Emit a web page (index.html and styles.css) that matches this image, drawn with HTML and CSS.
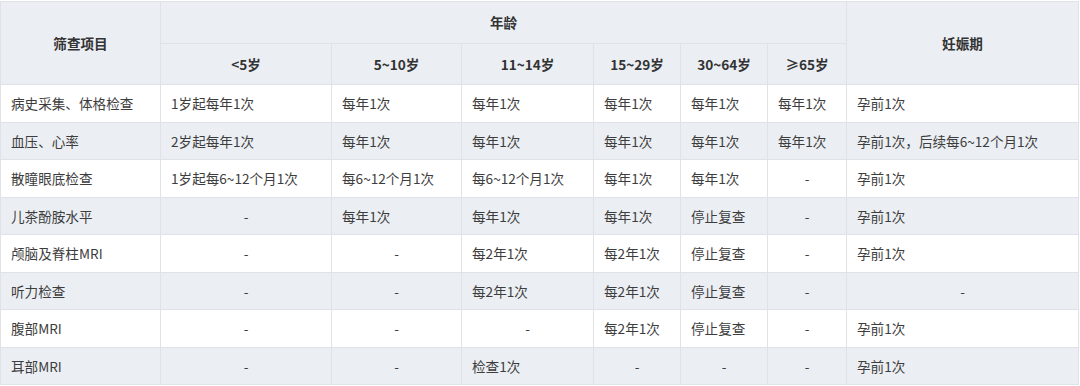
FILE: index.html
```html
<!DOCTYPE html>
<html lang="zh-CN">
<head>
  <meta charset="UTF-8" />
  <title>筛查项目</title>
  <link rel="stylesheet" href="styles.css">
</head>
<body>
  <table class="screening">
    <colgroup>
      <col style="width:160px">
      <col style="width:171px">
      <col style="width:130px">
      <col style="width:132px">
      <col style="width:87px">
      <col style="width:87px">
      <col style="width:79px">
      <col style="width:232px">
    </colgroup>
    <thead>
      <tr class="head-top">
        <th rowspan="2">筛查项目</th>
        <th colspan="6">年龄</th>
        <th rowspan="2">妊娠期</th>
      </tr>
      <tr class="head-sub">
        <th>&lt;5岁</th>
        <th>5~10岁</th>
        <th>11~14岁</th>
        <th>15~29岁</th>
        <th>30~64岁</th>
        <th>≥65岁</th>
      </tr>
    </thead>
    <tbody>
      <tr>
        <td>病史采集、体格检查</td>
        <td>1岁起每年1次</td>
        <td>每年1次</td>
        <td>每年1次</td>
        <td>每年1次</td>
        <td>每年1次</td>
        <td>每年1次</td>
        <td>孕前1次</td>
      </tr>
      <tr>
        <td>血压、心率</td>
        <td>2岁起每年1次</td>
        <td>每年1次</td>
        <td>每年1次</td>
        <td>每年1次</td>
        <td>每年1次</td>
        <td>每年1次</td>
        <td>孕前1次，后续每6~12个月1次</td>
      </tr>
      <tr>
        <td>散瞳眼底检查</td>
        <td>1岁起每6~12个月1次</td>
        <td>每6~12个月1次</td>
        <td>每6~12个月1次</td>
        <td>每年1次</td>
        <td>每年1次</td>
        <td class="none">-</td>
        <td>孕前1次</td>
      </tr>
      <tr>
        <td>儿茶酚胺水平</td>
        <td class="none">-</td>
        <td>每年1次</td>
        <td>每年1次</td>
        <td>每年1次</td>
        <td>停止复查</td>
        <td class="none">-</td>
        <td>孕前1次</td>
      </tr>
      <tr>
        <td>颅脑及脊柱MRI</td>
        <td class="none">-</td>
        <td class="none">-</td>
        <td>每2年1次</td>
        <td>每2年1次</td>
        <td>停止复查</td>
        <td class="none">-</td>
        <td>孕前1次</td>
      </tr>
      <tr>
        <td>听力检查</td>
        <td class="none">-</td>
        <td class="none">-</td>
        <td>每2年1次</td>
        <td>每2年1次</td>
        <td>停止复查</td>
        <td class="none">-</td>
        <td class="none">-</td>
      </tr>
      <tr>
        <td>腹部MRI</td>
        <td class="none">-</td>
        <td class="none">-</td>
        <td class="none">-</td>
        <td>每2年1次</td>
        <td>停止复查</td>
        <td class="none">-</td>
        <td>孕前1次</td>
      </tr>
      <tr>
        <td>耳部MRI</td>
        <td class="none">-</td>
        <td class="none">-</td>
        <td>检查1次</td>
        <td class="none">-</td>
        <td class="none">-</td>
        <td class="none">-</td>
        <td>孕前1次</td>
      </tr>
    </tbody>
  </table>
</body>
</html>
```

FILE: styles.css
```css
body {
  margin: 0;
  padding: 0;
  background: #ffffff;
  font-family: "Noto Sans CJK SC", "Noto Sans", sans-serif;
  font-size: 13.6px;
  color: #3d3d3d;
}
.screening {
  width: 1078px;
  table-layout: fixed;
  border-collapse: collapse;
  margin-top: 1px;
}
.screening th,
.screening td {
  border: 1px solid #dfe3e8;
  padding: 0 10px;
  vertical-align: middle;
  white-space: nowrap;
}
.screening th {
  background-color: #ebeff3;
  color: #333;
  font-weight: bold;
  text-align: center;
}
.head-top,
.head-sub {
  height: 41.5px;
}
.screening tbody tr {
  height: 37.5px;
}
.screening td {
  text-align: left;
}
.screening tbody tr:nth-child(even) td {
  background-color: #ebeff3;
}
.screening td.none {
  text-align: center;
}
```
